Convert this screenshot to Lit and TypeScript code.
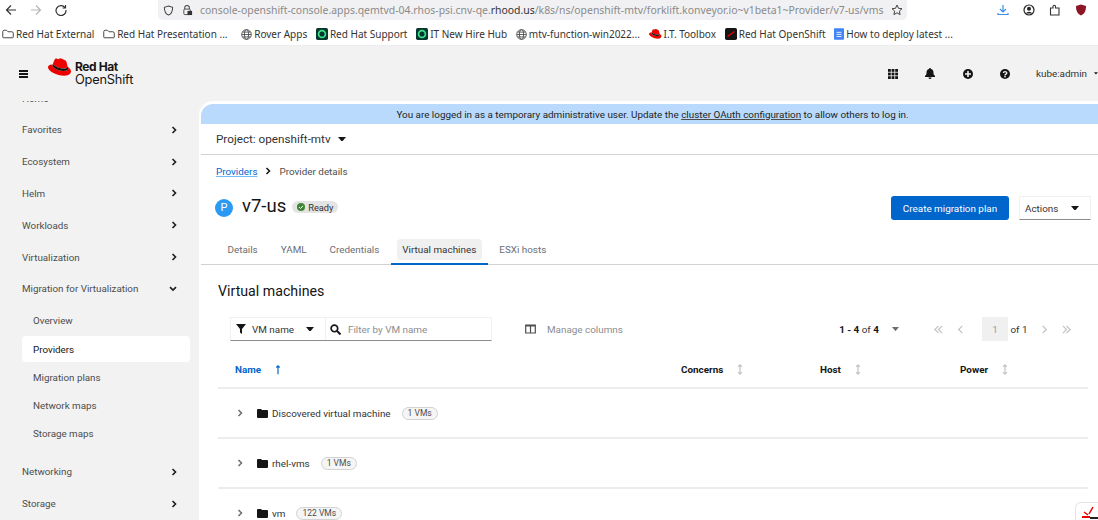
import { LitElement, html, css, svg } from "lit";
import { customElement } from "lit/decorators.js";

const chev = html`<svg class="chev" viewBox="0 0 8 10" width="6" height="8"><path d="M2 1l4 4-4 4" fill="none" stroke="#1f1f1f" stroke-width="2.200"/></svg>`;
const chevDown = html`<svg class="chev" viewBox="0 0 10 8" width="8" height="6"><path d="M1 1.500l4 4 4-4" fill="none" stroke="#1f1f1f" stroke-width="2.200"/></svg>`;
const caret = (c = "#151515", w = 8) => html`<svg viewBox="0 0 10 6" width="${w}" height="${w * 0.6}"><path d="M0 0h10L5 6z" fill="${c}"/></svg>`;
const folderB = html`<svg viewBox="0 0 16 16" width="12" height="12"><path d="M1 5a2 2 0 012-2h3l2 2h5a2 2 0 012 2v5a1 1 0 01-1 1H2a1 1 0 01-1-1z" fill="none" stroke="#444" stroke-width="1.300"/></svg>`;
const globe = html`<svg viewBox="0 0 16 16" width="11" height="11" fill="none" stroke="#333" stroke-width="1.100"><circle cx="8" cy="8" r="7"/><ellipse cx="8" cy="8" rx="3" ry="7"/><path d="M1 8h14M2 4.500h12M2 11.500h12"/></svg>`;
const hat = (w = 12) => svg`<svg viewBox="0 0 32 24" width="${w}" height="${w * 0.75}"><path d="M21 14c2 0 5-.3 5-2.900 0-.2 0-.4-.1-.6l-1.200-5.200C24.400 4.100 24.100 3.500 22 2.500 20.400 1.700 16.900.3 15.900.3c-1 0-1.200 1.200-2.300 1.200-1.100 0-1.900-.9-2.900-.9s-1.600.7-2.100 2.100L6.800 6.900c-.1.300-.1.500-.1.600 0 1.500 5.900 6.500 14.300 6.500z" fill="#e00"/><path d="M26.700 12c.3 1.400.3 1.500.3 1.700 0 2.400-2.700 3.700-6.200 3.700C12.900 17.400 6 12.800 6 9.800c0-.5.100-.9.300-1.300C3.500 8.700 0 9.200 0 12.300 0 17.400 12 23.700 21.500 23.700c7.300 0 9.200-3.300 9.200-5.900 0-2-1.800-4.400-4-5.800z" fill="#e00"/><path d="M26.700 12c.3 1.400.3 1.500.3 1.700 0 2.400-2.700 3.700-6.200 3.700C12.900 17.400 6 12.800 6 9.800c0-.5.100-.9.300-1.300l.6-1.500c-.1.300-.2.500-.2.600 0 1.500 5.900 6.500 14.300 6.500 2 0 5-.3 5-2.900 0-.2 0-.4-.1-.6z" fill="#111"/></svg>`;
const rhBadge = html`<svg viewBox="0 0 14 14" width="12" height="12"><rect width="14" height="14" rx="2" fill="#06382e"/><circle cx="7" cy="7" r="4" fill="none" stroke="#3fe08a" stroke-width="2"/></svg>`;

const navTop = ["Favorites", "Ecosystem", "Helm", "Workloads", "Virtualization"];
const sub = ["Overview", "Providers", "Migration plans", "Network maps", "Storage maps"];
const sortIcon = html`<svg class="sort" viewBox="0 0 6 12" width="6" height="11"><path d="M3 1v10M1 3l2-2 2 2M1 9l2 2 2-2" fill="none" stroke="#c4c4c4" stroke-width="1.300"/></svg>`;
const pg = (d: string) => html`<svg viewBox="0 0 12 10" width="11" height="9"><path d="${d}" fill="none" stroke="#c4c4c4" stroke-width="1.400"/></svg>`;

@customElement("app-root")
export class AppRoot extends LitElement {
  static styles = css`
    :host { display: block; width: 1098px; height: 520px; overflow: hidden; position: relative; font-family: "Roboto", "Open Sans", sans-serif; background: #f2f2f2; color: #151515; }
    * { box-sizing: border-box; }
    .chrome { height: 46px; background: #fff; border-bottom: 1px solid #ececec; font-family: "Noto Sans", sans-serif; }
    .toolbar { height: 23px; display: flex; align-items: flex-start; position: relative; }
    .navbtns { width: 158px; height: 20px; padding-left: 5px; display: flex; align-items: center; gap: 13px; }
    .url { width: 749px; height: 20px; background: #f1f1f3; border-radius: 0 0 5px 5px; display: flex; align-items: center; padding-left: 5px; font-size: 10.430px; color: #8a8a8a; white-space: nowrap; }
    .url b { color: #333; font-weight: 400; }
    .url .shield { margin-right: 8px; display: flex; }
    .url .lock { margin-right: 7px; display: flex; }
    .url .star { margin-left: auto; margin-right: 4px; display: flex; }
    .ext { display: flex; align-items: center; gap: 14px; margin-left: 90px; height: 20px; }
    .bookmarks { height: 22px; display: flex; align-items: center; padding-left: 2px; gap: 8.700px; font-size: 10px; color: #333; white-space: nowrap; }
    .bm { display: flex; align-items: center; gap: 2px; }
    .masthead { height: 55px; display: flex; align-items: center; padding-left: 19px; }
    .burger { width: 9px; height: 8px; border-top: 2px solid #151515; border-bottom: 2px solid #151515; position: relative; margin-right: 20px; }
    .burger::after { content: ""; position: absolute; left: 0; right: 0; top: 1px; height: 2px; background: #151515; }
    .logo { display: flex; align-items: flex-start; gap: 3px; margin-top: -3px; }
    .logo-text { font-size: 12.800px; line-height: 13.500px; letter-spacing: -.2px; font-family: "Inter", sans-serif; padding-top: 2px; }
    .logo-text b { display: block; font-weight: 700; font-size: 12px; letter-spacing: -.4px; }
    .mh-right { margin-left: auto; display: flex; align-items: center; font-size: 9.900px; color: #333; }
    .mh-right svg { display: block; }
    .mh-icons { display: flex; align-items: center; gap: 27.500px; margin-right: 26px; }
    .user { white-space: nowrap; width: 62px; overflow: hidden; display: flex; align-items: center; gap: 7px; }
    .body { display: flex; height: 419px; }
    .side { width: 199px; flex: none; overflow: hidden; font-size: 9.800px; color: #4d4d4d; position: relative; }
    .nav { margin-top: -18.800px; padding-left: 22px; }
    .item { height: 31.800px; display: flex; align-items: center; justify-content: space-between; padding-right: 22px; }
    .item .chev { display: block; }
    .subs { display: flex; flex-direction: column; gap: 2.300px; margin: 3px 0 9px; }
    .sub { height: 26px; width: 168px; padding-left: 11px; display: flex; align-items: center; border-radius: 4px; }
    .sub.on { background: #fff; color: #151515; }
    .main { flex: 1; background: #fff; padding: 3px 0 0 2px; border-top-left-radius: 14px; overflow: hidden; font-size: 9.900px; }
    .banner { height: 20px; background: #b9dafc; border-top-left-radius: 12px; display: flex; align-items: center; justify-content: center; color: #1f1f1f; white-space: nowrap; padding-left: 6px; }
    .banner a { color: #1f1f1f; text-decoration: underline; text-decoration-color: #4d4d4d; }
    .project { height: 31px; border-bottom: 1px solid #d2d2d2; display: flex; align-items: center; gap: 7px; padding-left: 15px; font-size: 11.700px; color: #333; }
    .crumbs { height: 32px; padding-left: 15px; display: flex; align-items: center; gap: 8px; color: #4d4d4d; }
    .crumbs a { color: #06c; text-decoration: underline; text-decoration-color: #73bcf7; }
    .head { height: 42px; display: flex; align-items: center; padding: 0 7px 0 14px; }
    .pbadge { width: 18px; height: 18px; border-radius: 50%; background: #2b9af3; color: #fff; font-size: 11px; display: flex; align-items: center; justify-content: center; margin-right: 9px; margin-top: -1px; }
    .title { font-size: 18.500px; color: #151515; margin-right: 6px; margin-top: -5px; }
    .ready { height: 12px; background: #e4e4e4; border-radius: 6px; display: flex; align-items: center; gap: 3px; padding: 0 5px; font-size: 9.250px; color: #333; margin-top: -2px; }
    .btn { margin-left: auto; width: 118px; height: 24px; background: #06c; color: #fff; border-radius: 3px; display: flex; align-items: center; justify-content: center; }
    .actions { margin-left: 10px; width: 72px; height: 24px; border-bottom: 1px solid #8a8d90; border-top: 1px solid #f0f0f0; border-right: 1px solid #f0f0f0; border-left: 1px solid #f0f0f0; display: flex; align-items: center; justify-content: space-between; padding: 0 11px 0 5px; color: #333; }
    .tabs { margin-top: 10px; height: 26px; border-bottom: 1px solid #d2d2d2; display: flex; padding-left: 15px; color: #6a6e73; }
    .tab { height: 26px; display: flex; align-items: center; padding: 0 11.500px 5px; white-space: nowrap; }
    .tab.on { color: #333; border-bottom: 2px solid #06c; position: relative; padding-bottom: 3px; z-index: 0; }
    .tab.on::before { content: ""; position: absolute; inset: 0 6px 3px 6px; background: #f0f0f0; border-radius: 4px; z-index: -1; }
    .content { padding: 0 8px 0 17px; }
    h2 { margin: 16px 0 0; height: 20px; font-weight: 400; font-size: 14.200px; line-height: 20px; color: #151515; }
    .tools { display: flex; align-items: center; margin-top: 16px; height: 24px; padding-left: 12px; color: #8a8d90; }
    .filter { width: 262px; height: 24px; display: flex; border-bottom: 1px solid #8a8d90; border-top: 1px solid #f0f0f0; border-left: 1px solid #f0f0f0; border-right: 1px solid #f0f0f0; }
    .f1 { width: 95px; display: flex; align-items: center; padding-left: 5px; gap: 6px; color: #333; border-right: 1px solid #f0f0f0; }
    .f1 .cr { margin-left: auto; margin-right: 11px; display: flex; }
    .f2 { flex: 1; display: flex; align-items: center; padding-left: 4px; gap: 7px; }
    .manage { margin-left: 33px; display: flex; align-items: center; gap: 11px; }
    .pager { margin-left: auto; display: flex; align-items: center; color: #333; }
    .pager b { font-weight: 700; color: #151515; }
    .count { display: flex; align-items: center; gap: 13px; margin-right: 34px; white-space: nowrap; }
    .pgs { display: flex; align-items: center; gap: 11px; padding-right: 18.500px; }
    .pgn { width: 26px; height: 24px; background: #f0f0f0; display: flex; align-items: center; justify-content: center; color: #999; margin: 0 -8.500px 0 5px; }
    .pgof { color: #333; white-space: nowrap; margin-right: 0; }
    .thead { margin-top: 11px; height: 37px; border-bottom: 2px solid #ececec; display: grid; grid-template-columns: 463px 139px 140px 1fr; align-items: center; font-weight: 700; width: 870px; }
    .th { display: flex; align-items: center; gap: 14px; }
    .th.name { padding-left: 17px; color: #06c; }
    .row { height: 50px; border-bottom: 2px solid #ececec; display: flex; align-items: center; padding-left: 19px; color: #333; width: 870px; }
    .row .f { margin: 0 4px 0 14px; display: flex; }
    .pill { margin-left: 11px; height: 13px; border: 1px solid #d2d2d2; background: #f5f5f5; border-radius: 7px; padding: 0 5px; display: flex; align-items: center; font-size: 8.500px; color: #4d4d4d; }
    .corner { position: absolute; right: 0; bottom: 0; width: 23px; height: 18px; background: #fff; border: 1px solid #e5e5e5; border-right: 0; border-bottom: 0; border-top-left-radius: 6px; overflow: hidden; }
    .corner svg { display: block; margin: 3px 0 0 5px; }
  `;

  render() {
    const folder = html`<svg viewBox="0 0 11 9" width="11" height="9"><path d="M0 1a1 1 0 011-1h3l1 1h5a1 1 0 011 1v6a1 1 0 01-1 1H1a1 1 0 01-1-1z" fill="#151515"/></svg>`;
    const rc = html`<svg viewBox="0 0 8 10" width="6" height="8"><path d="M2 1l4 4-4 4" fill="none" stroke="#6a6e73" stroke-width="2"/></svg>`;
    return html`
      <div class="chrome">
        <div class="toolbar">
          <div class="navbtns">
            <svg viewBox="0 0 12 12" width="12" height="12"><path d="M11 6H1.500M6 1.500L1.500 6 6 10.500" fill="none" stroke="#333" stroke-width="1.200"/></svg>
            <svg viewBox="0 0 12 12" width="12" height="12"><path d="M1 6h9.500M6 1.500L10.500 6 6 10.500" fill="none" stroke="#b5b5b5" stroke-width="1.200"/></svg>
            <svg viewBox="0 0 12 12" width="12" height="12"><path d="M10 3.500A5 5 0 1011 6M10.500 1v3h-3" fill="none" stroke="#333" stroke-width="1.200"/></svg>
          </div>
          <div class="url">
            <span class="shield"><svg viewBox="0 0 12 12" width="11" height="11"><path d="M6 1l4.500 1.500C10.500 7 9 10 6 11 3 10 1.500 7 1.500 2.500z" fill="none" stroke="#444" stroke-width="1.100"/></svg></span>
            <span class="lock"><svg viewBox="0 0 12 12" width="11" height="12"><path d="M3 5V3.500a2.500 2.500 0 015 0V5" fill="none" stroke="#444" stroke-width="1.100"/><rect x="2" y="5" width="7" height="6" rx="1" fill="none" stroke="#444"/><rect x="6" y="7" width="5" height="4.500" fill="#333"/></svg></span>
            <span>console-openshift-console.apps.qemtvd-04.rhos-psi.cnv-qe.<b>rhood.us</b>/k8s/ns/openshift-mtv/forklift.konveyor.io~v1beta1~Provider/v7-us/vms</span>
            <span class="star"><svg viewBox="0 0 12 12" width="12" height="12"><path d="M6 1l1.500 3.300 3.500.4-2.600 2.400.7 3.500L6 8.800 2.900 10.600l.7-3.500L1 4.700l3.500-.4z" fill="none" stroke="#444"/></svg></span>
          </div>
          <div class="ext">
            <svg viewBox="0 0 12 12" width="12" height="12"><path d="M6 1v7M3 5l3 3 3-3" fill="none" stroke="#3b8fe8" stroke-width="1.200"/><path d="M1 9v1.500h10V9" fill="none" stroke="#3b8fe8" stroke-width="1.200"/></svg>
            <svg viewBox="0 0 12 12" width="12" height="12"><circle cx="6" cy="6" r="5" fill="none" stroke="#222" stroke-width="1.200"/><circle cx="6" cy="4.800" r="2" fill="#222"/><path d="M2.800 9.500a3.500 3 0 016.400 0z" fill="#222"/></svg>
            <svg viewBox="0 0 12 12" width="12" height="12"><path d="M1.500 4h2.500V2.500a1.200 1.200 0 012.500 0V4h3.500v7h-8.500z" fill="none" stroke="#333" stroke-width="1.100"/></svg>
            <svg viewBox="0 0 12 12" width="12" height="12"><path d="M6 .5l5 1.500c0 5-1.500 8-5 9.500C2.500 10 1 7 1 2z" fill="#8c1526"/></svg>
          </div>
        </div>
        <div class="bookmarks">
          <span class="bm">${folderB}Red Hat External</span>
          <span class="bm">${folderB}Red Hat Presentation ...</span>
          <span class="bm" style="margin-left:5px">${globe}Rover Apps</span>
          <span class="bm">${rhBadge}Red Hat Support</span>
          <span class="bm">${rhBadge}IT New Hire Hub</span>
          <span class="bm">${globe}mtv-function-win2022...</span>
          <span class="bm">${hat(13)}I.T. Toolbox</span>
          <span class="bm"><svg viewBox="0 0 14 14" width="12" height="12"><rect width="14" height="14" rx="2" fill="#151515"/><path d="M3 10l8-6" stroke="#e00" stroke-width="1.500"/></svg>Red Hat OpenShift</span>
          <span class="bm"><svg viewBox="0 0 12 14" width="10" height="12"><rect width="12" height="14" rx="1" fill="#4285f4"/><path d="M3 5h6M3 7.500h6M3 10h6" stroke="#fff"/></svg>How to deploy latest ...</span>
        </div>
      </div>
      <div class="masthead">
        <div class="burger"></div>
        <div class="logo">
          ${hat(24)}
          <div class="logo-text"><b>Red Hat</b>OpenShift</div>
        </div>
        <div class="mh-right">
          <div class="mh-icons">
            <svg viewBox="0 0 10 10" width="10" height="10" fill="#151515"><rect width="2.800" height="2.800"/><rect x="3.600" width="2.800" height="2.800"/><rect x="7.200" width="2.800" height="2.800"/><rect y="3.600" width="2.800" height="2.800"/><rect x="3.600" y="3.600" width="2.800" height="2.800"/><rect x="7.200" y="3.600" width="2.800" height="2.800"/><rect y="7.200" width="2.800" height="2.800"/><rect x="3.600" y="7.200" width="2.800" height="2.800"/><rect x="7.200" y="7.200" width="2.800" height="2.800"/></svg>
            <svg viewBox="0 0 10 11" width="10" height="11" fill="#151515"><path d="M5 0a1 1 0 011 1c2 .5 2.500 2 2.500 4 0 1.500.5 2 1.500 3v1H0V8c1-1 1.500-1.500 1.500-3 0-2 .5-3.500 2.500-4a1 1 0 011-1zM3.500 9.500h3A1.500 1.500 0 015 11a1.500 1.500 0 01-1.500-1.500z"/></svg>
            <svg viewBox="0 0 10 10" width="10" height="10"><circle cx="5" cy="5" r="5" fill="#151515"/><path d="M5 2v6M2 5h6" stroke="#f2f2f2" stroke-width="1.600"/></svg>
            <svg viewBox="0 0 10 10" width="10" height="10"><circle cx="5" cy="5" r="5" fill="#151515"/><path d="M3.400 4C3.400 2.200 6.800 2.200 6.800 4 6.800 5.200 5 5 5 6.400" fill="none" stroke="#f2f2f2" stroke-width="1.300"/><rect x="4.300" y="7" width="1.400" height="1.400" fill="#f2f2f2"/></svg>
          </div>
          <div class="user"><span>kube:admin</span>${caret()}</div>
        </div>
      </div>
      <div class="body">
        <aside class="side">
          <div class="nav">
            <div class="item">Home</div>
            ${navTop.map((n) => html`<div class="item">${n}${chev}</div>`)}
            <div class="item">Migration for Virtualization${chevDown}</div>
            <div class="subs">
              ${sub.map((s) => html`<div class="sub ${s === "Providers" ? "on" : ""}">${s}</div>`)}
            </div>
            <div class="item">Networking${chev}</div>
            <div class="item">Storage${chev}</div>
          </div>
        </aside>
        <main class="main">
          <div class="banner"><span>You are logged in as a temporary administrative user. Update the <a>cluster OAuth configuration</a> to allow others to log in.</span></div>
          <div class="project">Project: openshift-mtv ${caret()}</div>
          <div class="crumbs"><a>Providers</a><svg viewBox="0 0 8 10" width="6" height="8"><path d="M2 1l4 4-4 4" fill="none" stroke="#151515" stroke-width="2"/></svg><span>Provider details</span></div>
          <div class="head">
            <span class="pbadge">P</span>
            <span class="title">v7-us</span>
            <span class="ready"><svg viewBox="0 0 8 8" width="8" height="8"><circle cx="4" cy="4" r="4" fill="#3e8635"/><path d="M2 4l1.500 1.500L6 2.800" fill="none" stroke="#fff"/></svg>Ready</span>
            <span class="btn">Create migration plan</span>
            <span class="actions">Actions ${caret()}</span>
          </div>
          <div class="tabs">
            <div class="tab">Details</div><div class="tab">YAML</div><div class="tab">Credentials</div><div class="tab on">Virtual machines</div><div class="tab">ESXi hosts</div>
          </div>
          <div class="content">
            <h2>Virtual machines</h2>
            <div class="tools">
              <div class="filter">
                <div class="f1"><svg viewBox="0 0 10 10" width="10" height="10"><path d="M0 0h10L6 5v5L4 8.500V5z" fill="#151515"/></svg><span>VM name</span><span class="cr">${caret()}</span></div>
                <div class="f2"><svg viewBox="0 0 10 10" width="11" height="11"><circle cx="4" cy="4" r="3" fill="none" stroke="#151515" stroke-width="1.500"/><path d="M6.200 6.200L9.500 9.500" stroke="#151515" stroke-width="1.800"/></svg><span>Filter by VM name</span></div>
              </div>
              <div class="manage"><svg viewBox="0 0 11 10" width="11" height="10"><path d="M.7 1h9.600v8H.7zM5.500 1v8M.7 2h9.600" fill="none" stroke="#4d4d4d" stroke-width="1.200"/></svg><span>Manage columns</span></div>
              <div class="pager">
                <div class="count"><span><b>1 - 4</b> of <b>4</b></span>${caret("#6a6e73", 7)}</div>
                <div class="pgs">
                  ${pg("M6 1L2 5l4 4M10 1L6 5l4 4")}${pg("M8 1L4 5l4 4")}
                  <span class="pgn">1</span>
                  <span class="pgof">of 1</span>
                  ${pg("M4 1l4 4-4 4")}${pg("M2 1l4 4-4 4M6 1l4 4-4 4")}
                </div>
              </div>
            </div>
            <div class="thead">
              <div class="th name">Name <svg viewBox="0 0 6 12" width="6" height="10"><path d="M3 11V1M1 3l2-2 2 2" fill="none" stroke="#06c" stroke-width="1.400"/></svg></div>
              <div class="th">Concerns ${sortIcon}</div>
              <div class="th">Host ${sortIcon}</div>
              <div class="th">Power ${sortIcon}</div>
            </div>
            <div class="row">${rc}<span class="f">${folder}</span>Discovered virtual machine<span class="pill">1 VMs</span></div>
            <div class="row">${rc}<span class="f">${folder}</span>rhel-vms<span class="pill">1 VMs</span></div>
            <div class="row">${rc}<span class="f">${folder}</span>vm<span class="pill">122 VMs</span></div>
          </div>
        </main>
      </div>
      <div class="corner"><svg viewBox="0 0 18 14" width="18" height="14"><path d="M1 11h8" stroke="#e00" stroke-width="2"/><path d="M3 6l4 3M8 8l4-7" stroke="#e00" stroke-width="1.500"/><path d="M9 12h9" stroke="#222" stroke-width="2"/></svg></div>
    `;
  }
}
